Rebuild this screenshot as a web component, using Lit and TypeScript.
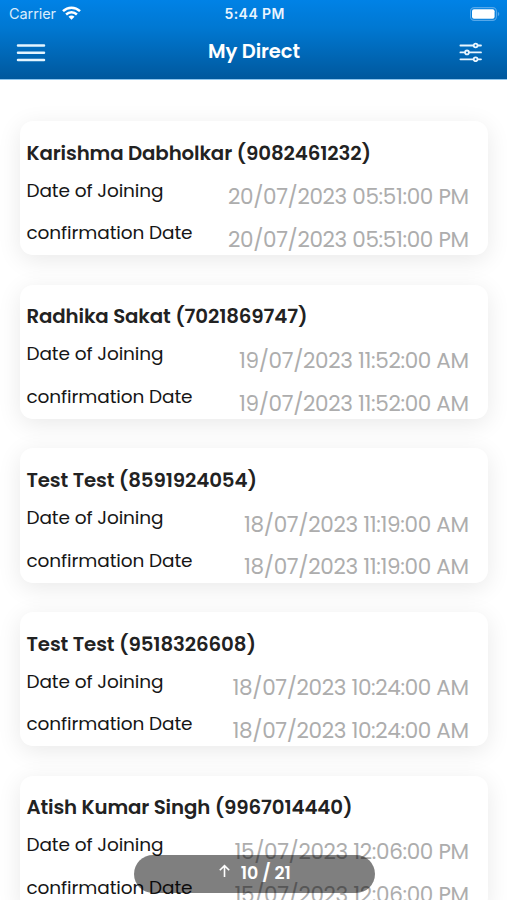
import { LitElement, html, css } from "lit";
import { customElement, property } from "lit/decorators.js";

/** A single line of text whose tracking is adjusted so that it fills a given width. */
@customElement("fit-text")
class FitText extends LitElement {
  @property() text = "";
  @property({ type: Number }) width = 0;

  static styles = css`
    :host { display: block; white-space: nowrap; }
    .line { display: inline-block; white-space: pre; }
  `;

  async updated() {
    await document.fonts.ready;
    const line = this.renderRoot.querySelector(".line") as HTMLElement;
    line.style.letterSpacing = "0px";
    line.style.marginRight = "0px";
    const natural = line.getBoundingClientRect().width;
    const gap = (this.width - natural) / Math.max(1, this.text.length - 1);
    line.style.letterSpacing = gap + "px";
    line.style.marginRight = -gap + "px";
  }

  render() {
    return html`<span class="line">${this.text}</span>`;
  }
}

interface Member {
  name: string;
  nameWidth: number;
  date: string;
  dateWidth: number;
}

const members: Member[] = [
  { name: "Karishma Dabholkar (9082461232)", nameWidth: 344.5, date: "20/07/2023 05:51:00 PM", dateWidth: 241 },
  { name: "Radhika Sakat (7021869747)", nameWidth: 281, date: "19/07/2023 11:52:00 AM", dateWidth: 230 },
  { name: "Test Test (8591924054)", nameWidth: 230.5, date: "18/07/2023 11:19:00 AM", dateWidth: 225 },
  { name: "Test Test (9518326608)", nameWidth: 229.5, date: "18/07/2023 10:24:00 AM", dateWidth: 236.5 },
  { name: "Atish Kumar Singh (9967014440)", nameWidth: 326, date: "15/07/2023 12:06:00 PM", dateWidth: 234.5 },
];

@customElement("app-root")
class AppRoot extends LitElement {
  static styles = css`
    :host {
      display: block;
      position: relative;
      height: 900px;
      overflow: hidden;
      background: #fff;
      font-family: Poppins, Inter, sans-serif;
    }
    header {
      box-sizing: border-box;
      height: 80px;
      background: linear-gradient(#0082e6, #0078d2 35%, #00589d);
      border-bottom: 1px solid #8fc6ee;
      color: #fff;
    }
    .status, .nav {
      display: grid;
      grid-template-columns: 1fr auto 1fr;
      align-items: center;
    }
    .status { height: 27px; padding: 0 7px 0 9px; line-height: 27px; font-family: Inter, sans-serif; }
    .carrier { display: flex; align-items: center; gap: 6px; font-size: 14.5px; color: #d9ecfc; }
    .time { font-size: 14px; font-weight: 600; color: #eaf5ff; }
    .right { justify-self: end; }
    .nav { height: 50px; padding: 0 24px 0 16px; }
    .title { font-size: 19.5px; font-weight: 600; line-height: 20px; margin: -1px -4.5px 0 4.5px; }
    svg { display: block; }
    .wifi { margin-top: -1px; }
    .list {
      display: flex;
      flex-direction: column;
      gap: 29.67px;
      padding: 41px 19.5px 0 20px;
    }
    .card {
      box-sizing: border-box;
      height: 134.2px;
      margin-bottom: -0.2px;
      flex: none;
      padding: 21.8px 18.5px 0 6.5px;
      border-radius: 13px;
      background: #fff;
      box-shadow: 0 5px 24px rgba(0, 0, 0, 0.09);
    }
    .name { font-size: 19.8px; font-weight: 600; line-height: 20px; color: #222; margin-bottom: 17.9px; }
    .row { display: flex; justify-content: space-between; height: 20px; margin-bottom: 22.67px; }
    .label { font-size: 18.5px; line-height: 20px; color: #161616; }
    .value { font-size: 21.5px; font-weight: 400; line-height: 20px; color: #adadad; margin-top: 6.6px; }
    .pill {
      position: absolute;
      left: 134px;
      top: 855px;
      width: 240.5px;
      height: 37.5px;
      border-radius: 19px;
      background: rgba(0, 0, 0, 0.5);
      display: flex;
      align-items: center;
      justify-content: center;
      gap: 10px;
      color: #fff;
    }
    .pill svg { margin-top: -5px; }
    .count { font-size: 17.5px; font-weight: 600; line-height: 20px; margin-top: -1px; }
  `;

  private row(label: string, width: number, m: Member) {
    return html`<div class="row">
      <fit-text class="label" .text=${label} .width=${width}></fit-text>
      <fit-text class="value" .text=${m.date} .width=${m.dateWidth}></fit-text>
    </div>`;
  }

  render() {
    return html`
      <header>
        <div class="status">
          <div class="carrier">
            <fit-text .text=${"Carrier"} .width=${47}></fit-text>
            <svg class="wifi" width="19" height="14" viewBox="0 0 19 14">
              <g fill="none" stroke="#fff" stroke-width="2.5">
                <path d="M1 5.2C5.8.6 13.2.6 18 5.2" />
                <path d="M4.1 8.5C7.2 5.6 11.8 5.6 14.9 8.5" />
              </g>
              <path fill="#fff" d="M6.5 10.7C8.2 9.2 10.8 9.2 12.5 10.7L9.5 13.7Z" />
            </svg>
          </div>
          <fit-text class="time" .text=${"5:44 PM"} .width=${60}></fit-text>
          <svg class="right" width="30" height="14" viewBox="0 0 30 14">
            <rect x=".5" y=".6" width="25.9" height="12.8" rx="3.8" fill="none" stroke="#55a8ea" stroke-width="1.1" />
            <rect x="2" y="2.2" width="22.6" height="9.6" rx="2" fill="#fff" />
            <path d="M27.8 4.8Q29.3 5.5 29.3 7T27.8 9.2Z" fill="#55a8ea" />
          </svg>
        </div>
        <div class="nav">
          <svg width="30" height="20" viewBox="0 0 30 20">
            <path d="M2 3.4H28M2 10.7H28M2 18H28" stroke="#e4f5ff" stroke-width="2.5" stroke-linecap="round" />
          </svg>
          <fit-text class="title" .text=${"My Direct"} .width=${92}></fit-text>
          <svg class="right" width="24" height="20" viewBox="0 0 24 20">
            <g fill="none" stroke="#e9f6ff" stroke-width="1.8" stroke-linecap="round">
              <path d="M1.4 3.5H14.3M19 3.5H22M1.4 10.4H5.7M10.4 10.4H22M1.4 17.3H14.3M19 17.3H22" />
              <circle cx="16.6" cy="3.5" r="1.9" />
              <circle cx="8" cy="10.4" r="1.9" />
              <circle cx="16.6" cy="17.3" r="1.9" />
            </g>
          </svg>
        </div>
      </header>
      <main class="list">
        ${members.map(
          (m) => html`<section class="card">
            <fit-text class="name" .text=${m.name} .width=${m.nameWidth}></fit-text>
            ${this.row("Date of Joining", 137, m)} ${this.row("confirmation Date", 166, m)}
          </section>`
        )}
      </main>
      <div class="pill">
        <svg width="13" height="14" viewBox="0 0 13 14">
          <path d="M6.5 13V2M1.8 6.3L6.5 1.6L11.2 6.3" fill="none" stroke="#fff" stroke-width="1.6" />
        </svg>
        <fit-text class="count" .text=${"10 / 21"} .width=${50}></fit-text>
      </div>
    `;
  }
}
